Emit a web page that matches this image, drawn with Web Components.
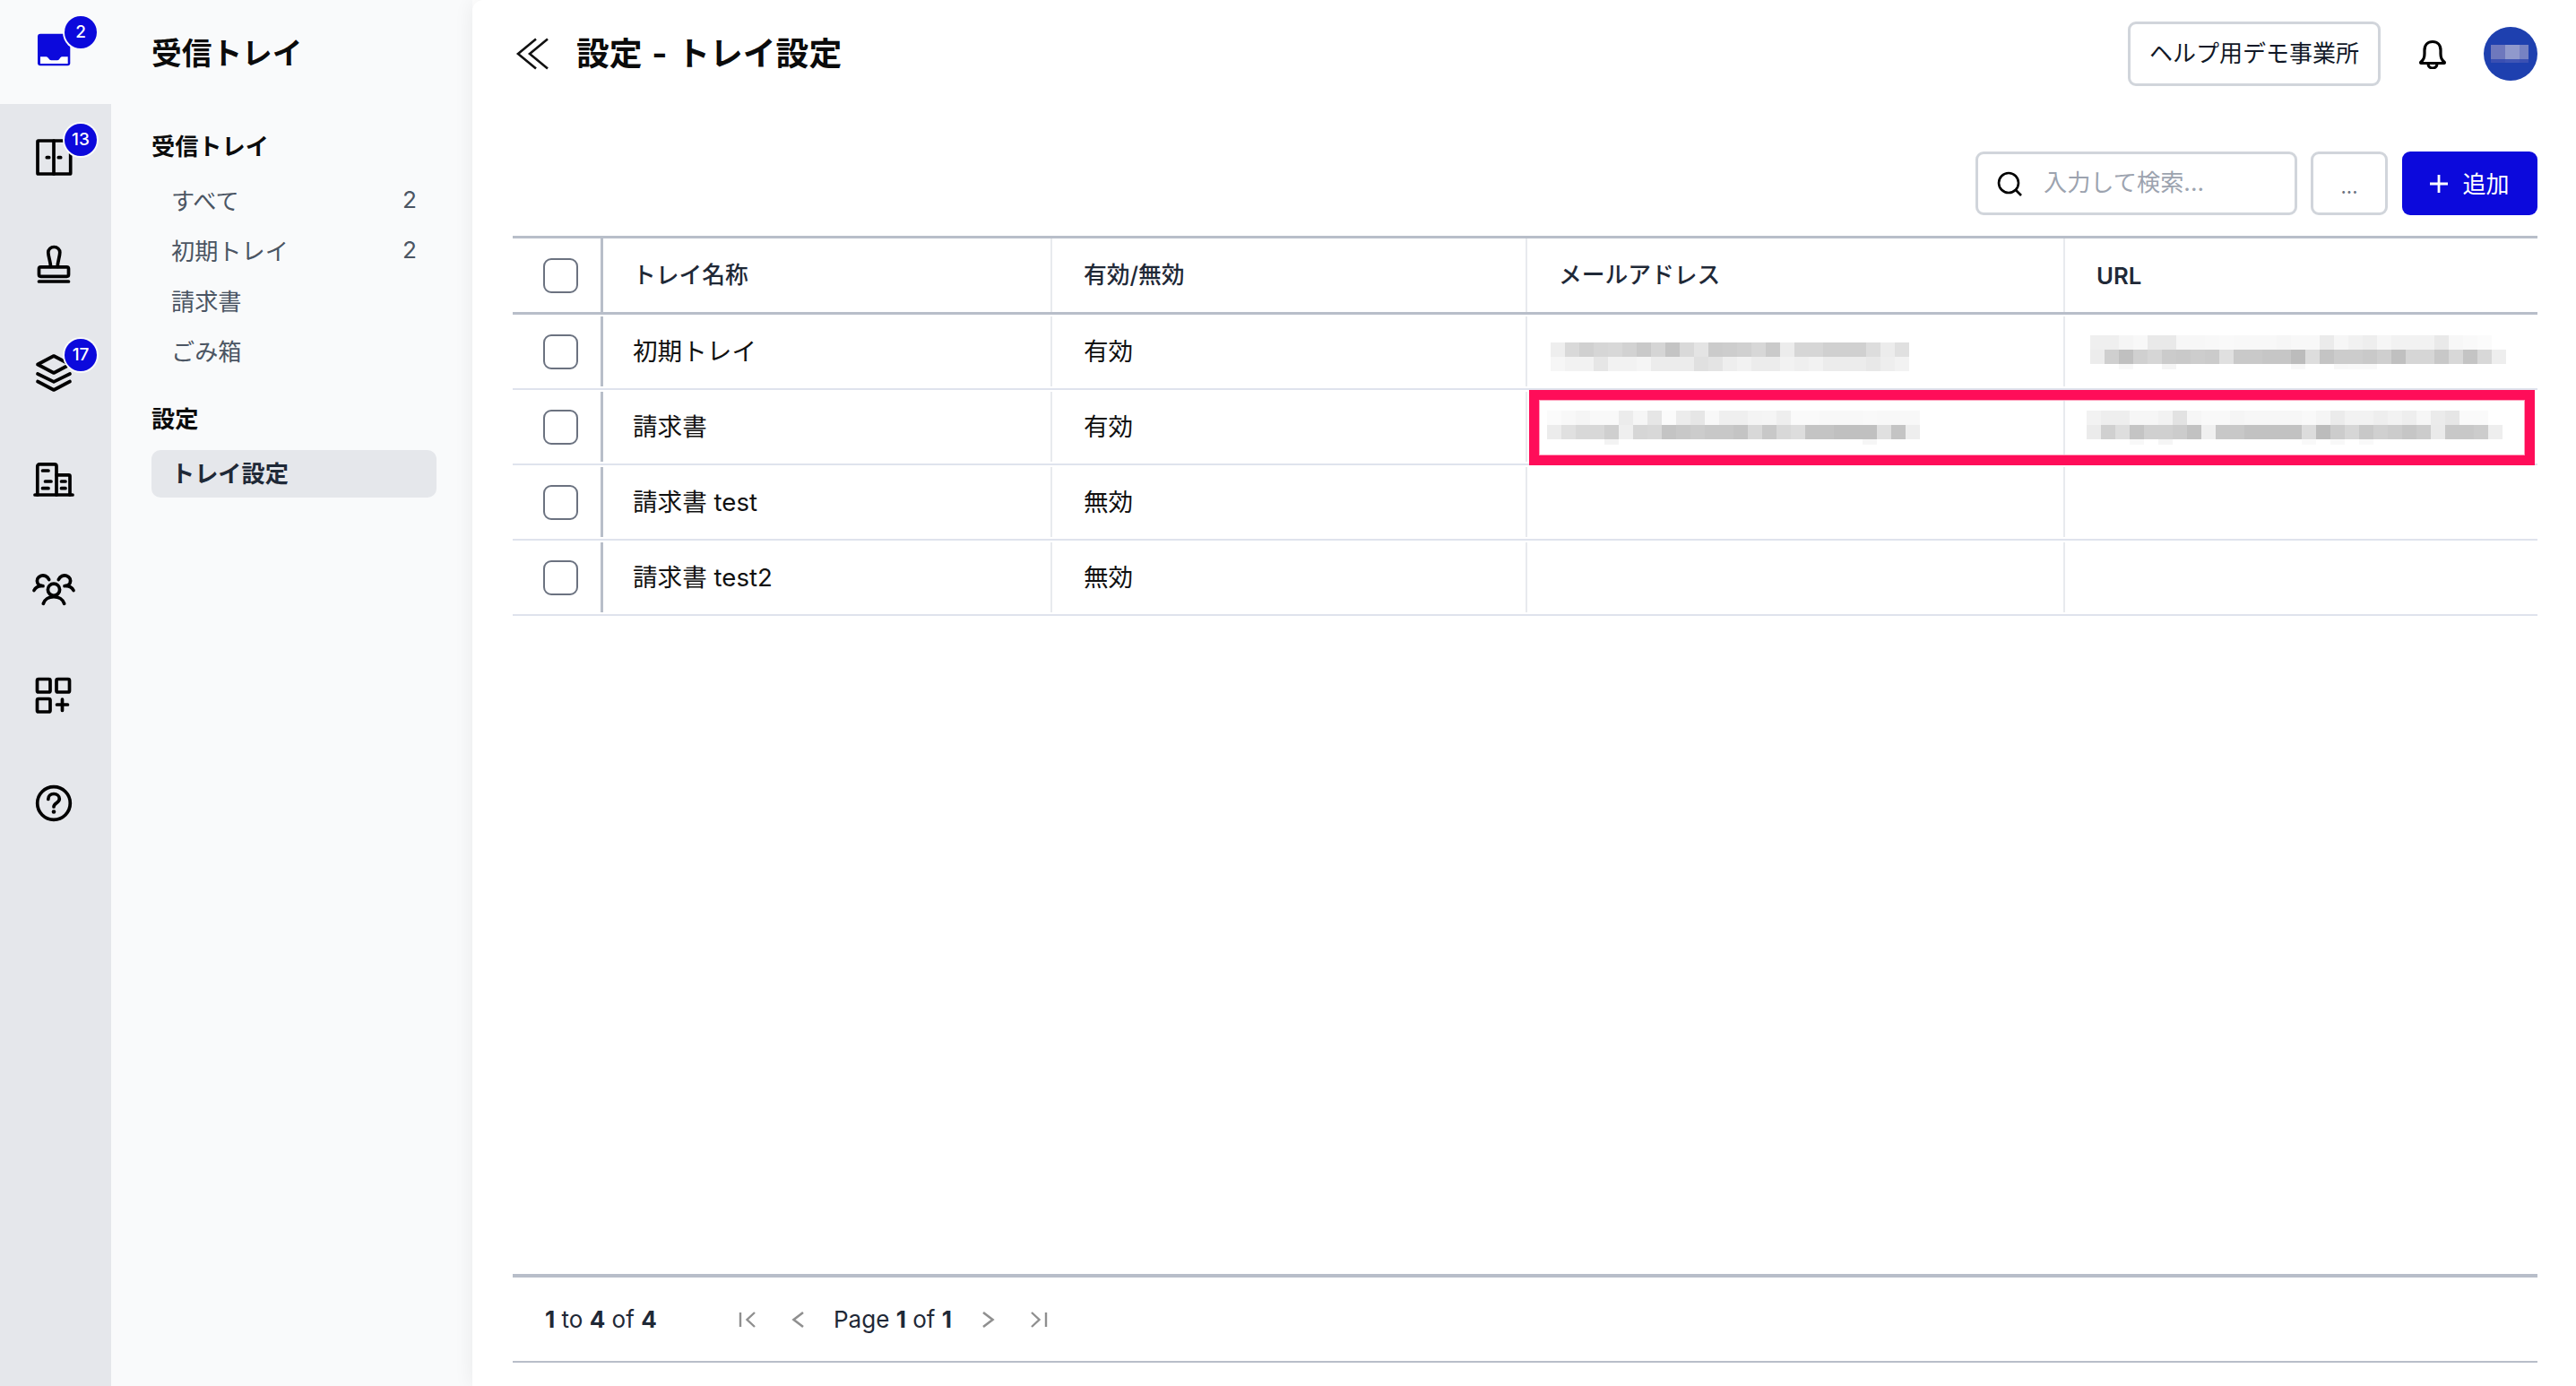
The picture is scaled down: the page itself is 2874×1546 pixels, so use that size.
<!DOCTYPE html>
<html lang="ja"><head><meta charset="utf-8"><title>設定 - トレイ設定</title>
<style>
html,body{margin:0;padding:0;background:#fff}
body{width:2874px;height:1546px;overflow:hidden;font-family:Inter,"Noto Sans CJK JP",sans-serif;color:#111827;display:grid;grid-template-columns:124px 403px 1fr}
</style></head><body>
<icon-rail></icon-rail>
<tray-sidebar></tray-sidebar>
<main-pane></main-pane>
<script>
const S='fill="none" stroke="#000" stroke-width="3.7" stroke-linecap="round" stroke-linejoin="round"';
const ICONS={
inbox:`<rect x="10" y="9.700" width="36.300" height="35.600" rx="3" fill="#0c09dc"/><path d="M13 35.300h6.700c2 0 3 4 5.500 4H32c2.500 0 3-4 5-4h6.700V43H13z" fill="#fff"/>`,
door:`<g ${S}><rect x="10" y="11" width="36.700" height="37" rx=".8"/><path d="M28 11v37"/><path d="M20.300 29.700h2.400M33.300 29.700h2.400"/></g>`,
stamp:`<g ${S}><path d="M24.500 31.500C24.500 26 21.800 20 21.800 15.500a6.500 6 0 0 1 13 0C34.800 20 32.200 26 32.200 31.500"/><rect x="11.500" y="31.800" width="33" height="10.500" rx="2"/><path d="M11.500 48h33"/></g>`,
layers:`<g ${S}><path d="M10 20.500L28 11l18 9.500L28 30z"/><path d="M10 31L28 39.800 46 31"/><path d="M10 39.500L28 49 46 39.500"/></g>`,
building:`<g ${S}><path d="M7 46h42"/><path d="M9.800 46V14a2.200 2.200 0 0 1 2.200-2.200h16.800a2.200 2.200 0 0 1 2.200 2.200V46"/><path d="M31 23.800h13.800A1.200 1.200 0 0 1 46 25V46"/><path d="M15.500 19h6.500M18.500 31h6.500M15.500 38.700h6.500M36.500 31h4.500M36.500 38.700h4.500"/></g>`,
users:`<g ${S}><circle cx="28" cy="31.700" r="6.600"/><path d="M16.300 47.300c1.500-4.500 6-7.600 11.700-7.600s10.200 3.100 11.700 7.600"/><path d="M22.700 20.500C21 16.800 17 15 13.800 16.200 10 17.700 8.500 21 10 24.500c1 2 3 3.200 6 3.200"/><path d="M33.300 20.500C35 16.800 39 15 42.200 16.200 46 17.700 47.500 21 46 24.500c-1 2-3 3.200-6 3.200"/><path d="M6 32.500c1.500-3 4.500-4.800 8-5.200M50 32.500c-1.500-3-4.500-4.800-8-5.200"/></g>`,
apps:`<g ${S} stroke-width="3.200"><rect x="9.500" y="11.500" width="14.500" height="14.500" rx="1.500"/><rect x="31" y="11.500" width="14.500" height="14.500" rx="1.500"/><rect x="9.500" y="33.500" width="14.500" height="14.500" rx="1.500"/><path d="M37.500 34v12.500M31.500 40h12"/></g>`,
help:`<g ${S}><circle cx="28" cy="30" r="18.300"/><path d="M21.800 25.500c0-3.500 2.800-6 6.200-6s6.300 2.300 6.300 5.500c0 4.800-6.300 4.800-6.300 9"/></g><circle cx="28" cy="39.500" r="2.300"/>`
};
function def(name,css,html,init){customElements.define(name,class extends HTMLElement{
  connectedCallback(){if(this.shadowRoot)return;const r=this.attachShadow({mode:'open'});r.innerHTML=`<style>${css}</style>`+(typeof html==='function'?html(this):html);if(init)init(this,r)}
})}
def('rail-item',`:host{display:flex;align-items:center;justify-content:center;height:120px;position:relative}
:host([top]){height:116px;background:#f9fafb}
svg{width:60px;height:60px;display:block}
.b{position:absolute;left:72px;width:36px;height:36px;border-radius:50%;background:#0c09dc;color:#fff;font:500 19px/36px Inter,sans-serif;text-align:center;box-shadow:0 0 0 2px #f9fafb}`,
 h=>`<svg viewBox="0 0 60 60">${ICONS[h.getAttribute('icon')]}</svg>`+(h.getAttribute('badge')?`<span class="b" style="top:${h.hasAttribute('top')?18:22}px">${h.getAttribute('badge')}</span>`:''));
def('icon-rail',`:host{display:block;background:#e5e7eb;height:1546px}`,
 ['inbox:2','door:13','stamp:','layers:17','building:','users:','apps:','help:'].map((s,i)=>{const[a,b]=s.split(':');return `<rail-item icon="${a}" ${b?`badge="${b}"`:''} ${i==0?'top':''}></rail-item>`}).join(''));
def('side-item',`:host{display:flex;justify-content:space-between;align-items:center;height:56px;padding:0 22px 3px;box-sizing:border-box;font-size:26.2px;color:#4b5563}
:host([active]){height:53px;background:#e5e7eb;border-radius:10px;font-weight:700;color:#1f2937;margin-top:12px;padding-bottom:4px}`,`<slot></slot><slot name="n"></slot>`);
def('side-label',`:host{display:block;height:44px;line-height:43px;font-size:26.2px;font-weight:700;color:#0b0b0b}`,`<slot></slot>`);
def('tray-sidebar',`:host{display:block;background:#f9fafb;height:1546px;padding-left:45px;box-sizing:border-box}
h2{margin:0 0 26px;height:116px;line-height:119px;font-size:33.7px;font-weight:700;color:#0b0b0b}
.w{width:318px}.t{height:26px}`,
`<h2>受信トレイ</h2><div class="w"><side-label>受信トレイ</side-label><div style="height:10px"></div>
<side-item>すべて<span slot="n">2</span></side-item><side-item>初期トレイ<span slot="n">2</span></side-item><side-item>請求書</side-item><side-item>ごみ箱</side-item>
<div class="t"></div><side-label>設定</side-label><side-item active>トレイ設定</side-item></div>`);
def('outline-btn',`:host{display:inline-flex;align-items:center;justify-content:center;box-sizing:border-box;border:3px solid #d1d5db;border-radius:9px;background:#fff;font-size:26px;color:#111827;padding-bottom:5px;white-space:nowrap}`,`<slot></slot>`);
def('page-header',`:host{display:flex;align-items:center;height:120px;box-sizing:border-box}
svg{display:block}
h1{margin:0 0 0 31px;padding-bottom:6px;font-size:36.8px;font-weight:700;color:#0b0b0b;flex:1;white-space:pre;word-spacing:2px}
outline-btn{width:282px;height:72px}
.bell{margin:0 41px 0 42px}
.av{width:60px;height:60px;border-radius:50%;background:#1e40af;display:flex;flex-direction:column;align-items:center;justify-content:center;padding-right:3px;box-sizing:border-box}
.m{display:flex;height:16px}.m i{display:block;height:100%}.m.l{height:4px}`,
`<svg width="40" height="36" viewBox="0 0 40 36" fill="none" stroke="#111" stroke-width="2.600"><path d="M26 1.500L6 18 26 34.500M39 1.500L19 18 39 34.500"/></svg>
<h1>設定 - トレイ設定</h1><outline-btn>ヘルプ用デモ事業所</outline-btn>
<svg class="bell" width="32" height="34" viewBox="0 0 32 34" fill="none" stroke="#000" stroke-width="3.200" stroke-linejoin="round"><path d="M3 26C6 24 7 22 7 17V13C7 7 10.500 3.500 16 3.500S25 7 25 13V17C25 22 26 24 29 26Q30 27.500 28.500 27.500H3.500Q2 27.500 3 26z"/><path d="M11 28a5 5 0 0 0 10 0"/></svg>
<div class="av"><div class="m"><i style="width:16px;background:#6e78bd"></i><i style="width:16px;background:#9099cc"></i><i style="width:10px;background:#7682c3"></i></div><div class="m l"><i style="width:16px;background:#3a4fb2"></i><i style="width:16px;background:#4055b5"></i><i style="width:10px;background:#3a50b3"></i></div></div>`);
def('table-toolbar',`:host{display:flex;justify-content:flex-end;gap:16px;padding-top:49px;height:71px}
.s{width:359px;height:71px;box-sizing:border-box;border:3px solid #d1d5db;border-radius:9px;display:flex;align-items:center;padding-left:21px;font-size:26.2px;color:#9ca3af;gap:24px;margin-right:-1px}
.s span{padding-bottom:5px}
outline-btn{width:86px;height:71px;padding-bottom:0}
outline-btn span{color:#6b7280;font-size:22px;margin-top:6px}
.a{width:151px;height:71px;border-radius:9px;background:#0c09dc;color:#fff;font-size:26px;display:flex;align-items:center;justify-content:center;gap:16px}
.a span{padding-bottom:3px}
svg{display:block;flex:none}`,
`<div class="s"><svg width="28" height="28" viewBox="0 0 28 28" fill="none" stroke="#000" stroke-width="2.600"><circle cx="13" cy="13" r="11"/><path d="M20.500 20.500L27 27"/></svg><span>入力して検索...</span></div>
<outline-btn><span>...</span></outline-btn>
<div class="a"><svg width="20" height="20" viewBox="0 0 20 20" stroke="#fff" stroke-width="2.800"><path d="M10 0v20M0 10h20"/></svg><span>追加</span></div>`);
def('tray-check',`:host{display:block;width:39px;height:39px;box-sizing:border-box;border:2.500px solid #6b7280;border-radius:9px;background:#fff}`,``);
const GRID='grid-template-columns:98px 502px 530px 600px 529px';
def('table-cell',`:host{display:flex;align-items:center;box-sizing:border-box;padding:0 0 4px 35px;font-size:27.6px;color:#111;margin:2px 0;border-left:2px solid #e8eaee;min-width:0}
:host([check]){border-left:none;padding:0 0 0 34px}
:host([first]){border-left:3px solid #b8bec9;padding-left:33px}
:host([flush]){padding:0;display:block}
:host([head]){font-size:25.76px;font-weight:500;color:#1f2937;margin:0;padding-bottom:6px}
:host([head][check]){padding-bottom:0}
:host([latin]){padding-bottom:0;font-weight:600}`,`<slot></slot>`);
def('table-row',`:host{display:grid;${GRID};height:84px;box-sizing:border-box;border-bottom:2.500px solid #dfe3ed}
:host([head]){height:85px;border-bottom:3px solid #b8bec9}`,`<slot></slot>`);
def('blur-mosaic',`:host{display:block}svg{display:block}`,``,(h,r)=>{
  const rows=h.getAttribute('rows').split('|').map(s=>s.trim().split(/\s+/));
  const hs=(h.getAttribute('hs')||'16,16,6').split(',').map(Number);
  let y=0,o='';const w=Math.max(...rows.map(x=>x.length))*16;
  rows.forEach((row,j)=>{row.forEach((c,i)=>{if(c!=='--')o+=`<rect x="${i*16}" y="${y}" width="16" height="${hs[j]}" fill="#${c}${c}${c}"/>`});y+=hs[j]});
  r.innerHTML+=`<svg width="${w}" height="${y}" shape-rendering="crispEdges">${o}</svg>`;
  h.style.margin=`${h.getAttribute('dy')}px 0 0 ${h.getAttribute('dx')}px`;
});
def('tray-table',`:host{display:block;position:relative;margin-top:23px;border-top:3px solid #b8bec9}
.hl{position:absolute;left:1134px;top:169px;width:1122px;height:84px;box-sizing:border-box;border:11px solid #ff0d59;box-shadow:inset 0 0 0 1px #ff9dbb}`,
`<table-row head><table-cell head check><tray-check></tray-check></table-cell><table-cell head first>トレイ名称</table-cell><table-cell head>有効/無効</table-cell><table-cell head>メールアドレス</table-cell><table-cell head latin>URL</table-cell></table-row>
<table-row><table-cell check><tray-check></tray-check></table-cell><table-cell first>初期トレイ</table-cell><table-cell>有効</table-cell>
<table-cell flush><blur-mosaic dx="26" dy="29" rows="ee d9 d0 d6 d8 d2 c9 d5 c4 d9 e4 cb cd d0 d7 ca ec d6 d6 d0 d0 d0 dd ec e0|f6 f2 f2 e6 f2 f2 f5 ec ec ec e0 e4 ee f2 ec ec f2 ef f2 ec ec ec e8 ee f2" hs="16,16"></blur-mosaic></table-cell>
<table-cell flush><blur-mosaic dx="28" dy="21" rows="ef ef f5 f8 e9 e9 f7 f7 f8 f9 f8 f8 f8 f6 f8 f8 eb f6 f1 ee f6 f2 f2 f2 e9 f7 f9 fb|ec cf c0 d0 d6 cb c9 cd cb e0 c9 c9 c6 c6 bc dd c4 cc cc c9 cf c0 d6 d6 c8 d8 c4 d8 ee|-- -- f8 -- -- f5 -- -- -- -- -- -- -- -- f8 -- -- f8 f9 f9"></blur-mosaic></table-cell></table-row>
<table-row><table-cell check><tray-check></tray-check></table-cell><table-cell first>請求書</table-cell><table-cell>有効</table-cell>
<table-cell flush><blur-mosaic dx="22" dy="21" rows="fb f8 f5 f9 f9 ec f6 e6 fb ec e6 f8 ef ef f4 f5 ee fa fa f8 f8 f8 f9 f8 f8 f8|ec e0 d8 d8 cf ef d6 d8 c4 c8 cc c8 c8 c4 d8 c8 d8 dd c4 c4 c0 c0 c0 e0 c4 ee|-- -- -- -- f3 -- -- -- -- -- -- -- -- -- -- -- -- -- -- -- -- -- f6"></blur-mosaic></table-cell>
<table-cell flush><blur-mosaic dx="24" dy="21" rows="f2 ee ee f6 f6 f2 e2 f6 f9 f9 f5 f7 f7 f7 f7 f9 f5 eb f2 f2 ee f2 ee f6 eb e6 fa fa|eb d0 de c4 d0 d0 cc c2 f0 c8 c8 c2 c2 c2 c2 dc bc cc d6 c8 d0 cc c6 cc ea c8 c8 cc ee|-- -- -- f8 -- f5 -- -- -- -- -- -- -- -- -- f9 -- f8 -- f9"></blur-mosaic></table-cell></table-row>
<table-row><table-cell check><tray-check></tray-check></table-cell><table-cell first>請求書 test</table-cell><table-cell>無効</table-cell><table-cell></table-cell><table-cell></table-cell></table-row>
<table-row><table-cell check><tray-check></tray-check></table-cell><table-cell first>請求書 test2</table-cell><table-cell>無効</table-cell><table-cell></table-cell><table-cell></table-cell></table-row>
<div class="hl"></div>`);
def('page-footer',`:host{display:flex;align-items:center;box-sizing:border-box;margin-top:auto;height:99px;border-top:4px solid #b8bec9;border-bottom:2.500px solid #b8bec9;margin-bottom:26px;padding-left:36px;font-size:26px;color:#1f2937}
b{font-weight:700}svg{display:block;flex:none;fill:none;stroke:#8f8f8f;stroke-width:2.400}
.c{width:216px}.p{margin:0 33px 0 32px}`,
`<span class="c"><b>1</b> to <b>4</b> of <b>4</b></span>
<svg width="20" height="20" viewBox="0 0 20 20"><path d="M2 2v16M18 2L9.500 10 18 18"/></svg>
<svg style="margin-left:39px" width="15" height="20" viewBox="0 0 15 20"><path d="M13 2L2.500 10 13 18" stroke-width="2.600"/></svg>
<span class="p">Page <b>1</b> of <b>1</b></span>
<svg width="15" height="20" viewBox="0 0 15 20"><path d="M2 2L12.500 10 2 18" stroke-width="2.600"/></svg>
<svg style="margin-left:39px" width="20" height="20" viewBox="0 0 20 20"><path d="M2 2l8.500 8L2 18M18 2v16"/></svg>`);
def('main-pane',`:host{display:flex;flex-direction:column;box-sizing:border-box;height:1546px;padding:0 43px 0 45px;background:#fff;border-top-left-radius:12px;box-shadow:0 0 22px rgba(0,0,0,.07);position:relative;min-width:0}`,
`<page-header></page-header><table-toolbar></table-toolbar><tray-table></tray-table><page-footer></page-footer>`);
</script></body></html>
